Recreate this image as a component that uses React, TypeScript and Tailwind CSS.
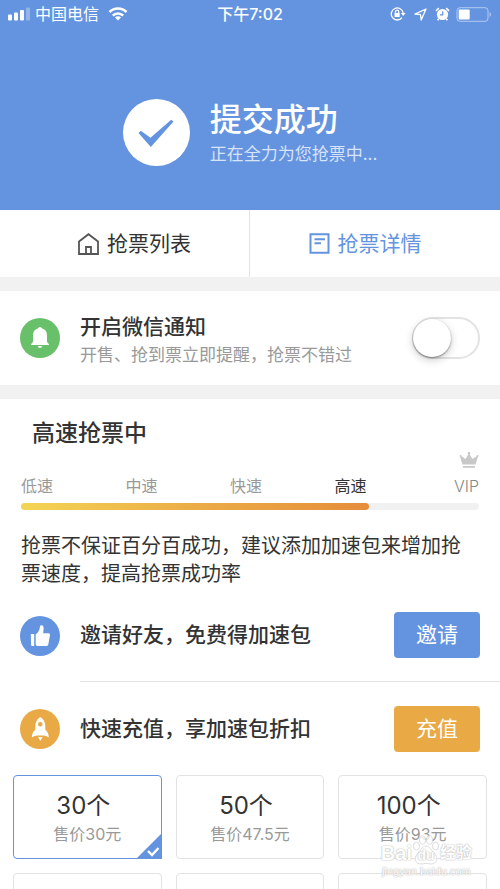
import { useState } from 'react';

const packs = [
  { count: '30个', price: '售价30元' },
  { count: '50个', price: '售价47.5元' },
  { count: '100个', price: '售价93元' },
];

const speeds = ['低速', '中速', '快速', '高速'];

const StatusBar = () => (
  <div className="grid h-7 grid-cols-[1fr_auto_1fr] items-center px-2 text-base">
    <div className="flex items-center">
      <svg width="22" height="14" viewBox="0 0 22 14" fill="currentColor" className="mr-[5px]">
        <rect x="0" y="7.500" width="4" height="6" rx="1" />
        <rect x="6" y="5.500" width="4" height="8" rx="1" />
        <rect x="12" y="3" width="4" height="10.500" rx="1" />
        <rect x="18" y="0.500" width="4" height="13" rx="1" opacity="0.3" />
      </svg>
      <span>中国电信</span>
      <svg width="20" height="14" viewBox="0 0 20 14" className="ml-[9px]" fill="none" stroke="currentColor" strokeWidth="2.600">
        <path d="M1.500 5a12 12 0 0 1 17 0" />
        <path d="M4.800 8.700a7.400 7.400 0 0 1 10.400 0" />
        <path d="M10 13.500l-3-2.900a4.200 4.200 0 0 1 6 0z" fill="currentColor" stroke="none" />
      </svg>
    </div>
    <span className="font-medium">下午7:02</span>
    <div className="flex items-center justify-end">
      <svg width="16" height="14" viewBox="0 0 16 14" fill="none" stroke="currentColor" strokeWidth="1.300">
        <path d="M12 10.700a6 6 0 1 1 1.200-4.700" />
        <path d="M10.800 6h4.800l-2.400 3z" fill="currentColor" stroke="none" />
        <rect x="4.500" y="6" width="5.200" height="4" fill="currentColor" stroke="none" />
        <path d="M5.500 6V4.800a1.600 1.600 0 0 1 3.200 0V6" />
      </svg>
      <svg width="13" height="13" viewBox="0 0 13 13" className="ml-2" fill="none" stroke="currentColor" strokeWidth="1.300" strokeLinejoin="round">
        <path d="M12 1L1 6.200l5.500.4L7.200 12z" />
      </svg>
      <svg width="15" height="14" viewBox="0 0 15 14" className="ml-2">
        <circle cx="7.500" cy="7.500" r="5.600" fill="currentColor" />
        <path d="M1 3.800L3.800 1.200M14 3.800L11.200 1.200M3.800 11.800l-1.200 1.500M11.200 11.800l1.200 1.500" stroke="currentColor" strokeWidth="1.600" />
        <path d="M7.700 4.200v3.600H5" stroke="#6494e0" strokeWidth="1.200" fill="none" />
      </svg>
      <svg width="36" height="15" viewBox="0 0 36 15" className="ml-[6px]">
        <rect x="1" y="0.700" width="31" height="13.600" rx="3" fill="none" stroke="currentColor" opacity="0.5" />
        <rect x="2.700" y="2.500" width="11" height="10" rx="1" fill="currentColor" />
        <path d="M33.600 5.200c1.900.6 1.900 4 0 4.600z" fill="currentColor" opacity="0.5" />
      </svg>
    </div>
  </div>
);

const BellIcon = () => (
  <svg width="40" height="40" viewBox="0 0 40 40" className="shrink-0">
    <circle cx="20" cy="20" r="20" fill="#69c06a" />
    <path d="M20 9c1 0 1.600.6 1.700 1.300 3.500.8 5.300 3.400 5.300 6.800v6c0 1.300.5 2 1.900 3v.9H11.100v-.9c1.400-1 1.900-1.700 1.900-3v-6c0-3.400 1.800-6 5.300-6.800.1-.7.700-1.300 1.700-1.300zM17.900 28h4.200c-.2 1.200-1 1.900-2.100 1.900s-1.900-.7-2.100-1.900z" fill="#fff" />
  </svg>
);

const ThumbIcon = () => (
  <svg width="40" height="40" viewBox="0 0 40 40" className="shrink-0">
    <circle cx="20" cy="20" r="20" fill="#6494e0" />
    <path d="M10.800 18h3.400v12H12q-.8 0-.9-1zM15.700 18.300c2.600-1.600 3.800-4 4.200-7.300.1-1.300.8-1.900 1.700-1.800 1.400.1 2.100 1.300 2 3.300l-.4 4.700h5.200c1.200 0 1.800.8 1.600 1.900l-1.600 9c-.2 1.300-.8 1.900-2 1.900h-8.700c-1.300 0-2-.6-2-1.900z" fill="#fff" />
  </svg>
);

const RocketIcon = () => (
  <svg width="40" height="40" viewBox="0 0 40 40" className="shrink-0">
    <circle cx="20" cy="20" r="20" fill="#e9a944" />
    <path
      fillRule="evenodd"
      d="M20.300 8c3.400 2.200 5 5.500 5 9.200v3.500c2.300 1.800 3.500 4.300 3.500 7.900-1.800-1.500-3.500-2.200-5.300-2.200h-6.400c-1.800 0-3.500.7-5.300 2.200 0-3.600 1.200-6.100 3.500-7.900v-3.500c0-3.700 1.600-7 5-9.200zm0 5a2.300 2.300 0 1 0 0 4.600 2.300 2.300 0 0 0 0-4.600z"
      fill="#fff"
    />
    <path d="M18 27.700q2.300.9 4.600 0L20.300 32z" fill="#fff" />
  </svg>
);

const boosts = [
  { icon: ThumbIcon, text: '邀请好友，免费得加速包', action: '邀请', color: 'bg-[#6494e0]' },
  { icon: RocketIcon, text: '快速充值，享加速包折扣', action: '充值', color: 'bg-[#e9a944]' },
];

const Watermark = () => (
  <div className="absolute right-7 bottom-3 flex flex-col items-center font-['Liberation_Sans','Noto_Sans_CJK_SC',sans-serif] text-white [text-shadow:0_0_1px_#aaa,0_0_2px_#ccc]">
    <div className="flex items-end text-xl leading-6 font-bold">
      <span>Bai</span>
      <span className="relative flex h-8 w-7 items-end justify-center text-sm leading-5">
        <svg width="28" height="30" viewBox="0 0 28 30" className="absolute bottom-0 left-0" fill="#fff" fillOpacity="0.8" stroke="#d4d4d4" strokeWidth="0.800">
          <ellipse cx="4.500" cy="11" rx="3" ry="4" />
          <ellipse cx="10.500" cy="5" rx="3" ry="4.200" />
          <ellipse cx="17.500" cy="5" rx="3" ry="4.200" />
          <ellipse cx="23.500" cy="11" rx="3" ry="4" />
          <path d="M14 11c4 0 5 4 8 7 5 5 3 11-3 11-2 0-3-.7-5-.7s-3 .7-5 .7c-6 0-8-6-3-11 3-3 4-7 8-7z" />
        </svg>
        <span className="relative">du</span>
      </span>
      <span className="text-base leading-6">经验</span>
    </div>
    <span className="text-[11px] leading-3">jingyan.baidu.com</span>
  </div>
);

const App = () => {
  const [notify, setNotify] = useState(false);
  const [selected, setSelected] = useState(0);

  return (
    <div className="relative h-screen overflow-hidden bg-white font-['Inter','Noto_Sans_CJK_SC',sans-serif] text-[#333]">
      <header className="bg-[#6494e0] text-white">
        <StatusBar />
        <div className="flex items-center justify-center gap-5 pt-[66px] pb-10">
          <svg width="67" height="67" viewBox="0 0 67 67">
            <circle cx="33.500" cy="33.500" r="33.500" fill="#fff" />
            <path d="M15.500 34l2.300-2.300 9.700 7.100 20.700-18 2.300 1.600L27.800 48z" fill="#6494e0" />
          </svg>
          <div className="pt-2">
            <h1 className="text-[32px] leading-9 font-medium">提交成功</h1>
            <p className="text-[17px] leading-8 text-white/75">正在全力为您抢票中...</p>
          </div>
        </div>
      </header>

      {/* Tabs */}
      <nav className="grid h-[67px] grid-cols-2 text-[21px]">
        <button className="flex items-center justify-center gap-2 border-r border-[#e3e3e3] pl-5">
          <svg width="21" height="22" viewBox="0 0 21 22" fill="none" stroke="#555" strokeWidth="1.800">
            <path d="M1 8.500L10.500 1.200 20 8.500V21H1z" />
            <path d="M8 21v-7h5v7" />
          </svg>
          抢票列表
        </button>
        <button className="flex items-center justify-center gap-2 pr-5 text-[#6494e0]">
          <svg width="21" height="21" viewBox="0 0 21 21" fill="none" stroke="currentColor" strokeWidth="2">
            <path d="M1.500 1.200h18v18.600h-18zM5.500 6.200h10.500M5.500 10.200h6.500" />
          </svg>
          抢票详情
        </button>
      </nav>

      {/* WeChat notice */}
      <section className="flex h-[122px] items-center border-y-14 border-[#f1f1f1] px-5">
        <BellIcon />
        <label htmlFor="notify" className="ml-5 flex-1 pt-[6px]">
          <span className="block text-[21px] leading-7 font-medium">开启微信通知</span>
          <span className="block text-[17px] leading-7 text-[#999]">开售、抢到票立即提醒，抢票不错过</span>
        </label>
        <input
          id="notify"
          type="checkbox"
          role="switch"
          checked={notify}
          onChange={() => setNotify(!notify)}
          className="h-[42px] w-[68px] appearance-none rounded-full border-2 border-[#e3e3e3] bg-white before:-ml-px before:block before:size-[38px] before:rounded-full before:bg-white before:shadow-[0_3px_8px_rgba(0,0,0,0.2),0_1px_2px_rgba(0,0,0,0.4)] checked:bg-[#69c06a] checked:before:ml-[27px]"
        />
      </section>

      <section>
        <h2 className="px-8 pt-[18px] text-[23px] leading-8 font-medium">高速抢票中</h2>

        {/* Speed bar */}
        <div className="px-[21px] pb-px">
          <div className="grid grid-cols-[1fr_1fr_1fr_1fr_40px] items-end pt-[2px] text-base leading-6 text-[#999]">
            {speeds.map((speed) => (
              <span key={speed} className={speed === '高速' ? 'text-[#333]' : ''}>{speed}</span>
            ))}
            <div className="flex flex-col items-end gap-[5px]">
              <svg width="20" height="18" viewBox="0 0 20 18" fill="#c8c8c8">
                <path d="M3.500 13.500L1.100 6a1 1 0 1 1 1.400-.8L6.600 8 9.300 3.200a1.300 1.300 0 1 1 1.400 0L13.400 8l4.100-2.800a1 1 0 1 1 1.400.8l-2.400 7.500zM4 15h12v1.800H4z" />
              </svg>
              <span className="font-light text-[#888]">VIP</span>
            </div>
          </div>
          <div className="mt-[5px] h-[7px] rounded-full bg-[#f1f1f1]">
            <div className="h-full w-[76%] rounded-full bg-linear-to-r from-[#f3d555] via-[#ebac46] to-[#e68d3c]" />
          </div>
          <p className="mt-[22px] text-[20px] leading-7">抢票不保证百分百成功，建议添加加速包来增加抢票速度，提高抢票成功率</p>
        </div>

        {boosts.map((boost, index) => (
          <div key={boost.action} className="flex h-[93px] items-center pl-5">
            <boost.icon />
            <div className={`ml-5 flex h-full flex-1 items-center justify-between pr-5 ${index === 0 ? 'border-b border-[#e3e3e3]' : ''}`}>
              <span className="text-[21px] font-medium">{boost.text}</span>
              <button className={`h-[46px] w-[86px] rounded text-[21px] text-white ${boost.color}`}>{boost.action}</button>
            </div>
          </div>
        ))}

        {/* Packs */}
        <div className="grid grid-cols-3 gap-[14px] px-[13px]">
          {packs.map((pack, index) => (
            <button
              key={pack.count}
              aria-pressed={selected === index}
              onClick={() => setSelected(index)}
              className={`relative h-[84px] rounded border pt-[2px] ${selected === index ? 'border-[#6494e0]' : 'border-[#e3e3e3]'}`}
            >
              <span className="block pr-2 text-2xl leading-8">{pack.count}</span>
              <span className="block text-base leading-6 text-[#999]">{pack.price}</span>
              {selected === index && (
                <svg width="26" height="26" viewBox="0 0 26 26" className="absolute -right-px -bottom-px">
                  <path d="M26 0v26H0z" fill="#6494e0" />
                  <path d="M12 18l4 4 6.500-7" fill="none" stroke="#fff" strokeWidth="2.400" />
                </svg>
              )}
            </button>
          ))}
          {packs.map((pack) => (
            <div key={pack.count} className="h-[84px] rounded border border-[#e3e3e3]" />
          ))}
        </div>
      </section>

      <Watermark />
    </div>
  );
};

export default App;
